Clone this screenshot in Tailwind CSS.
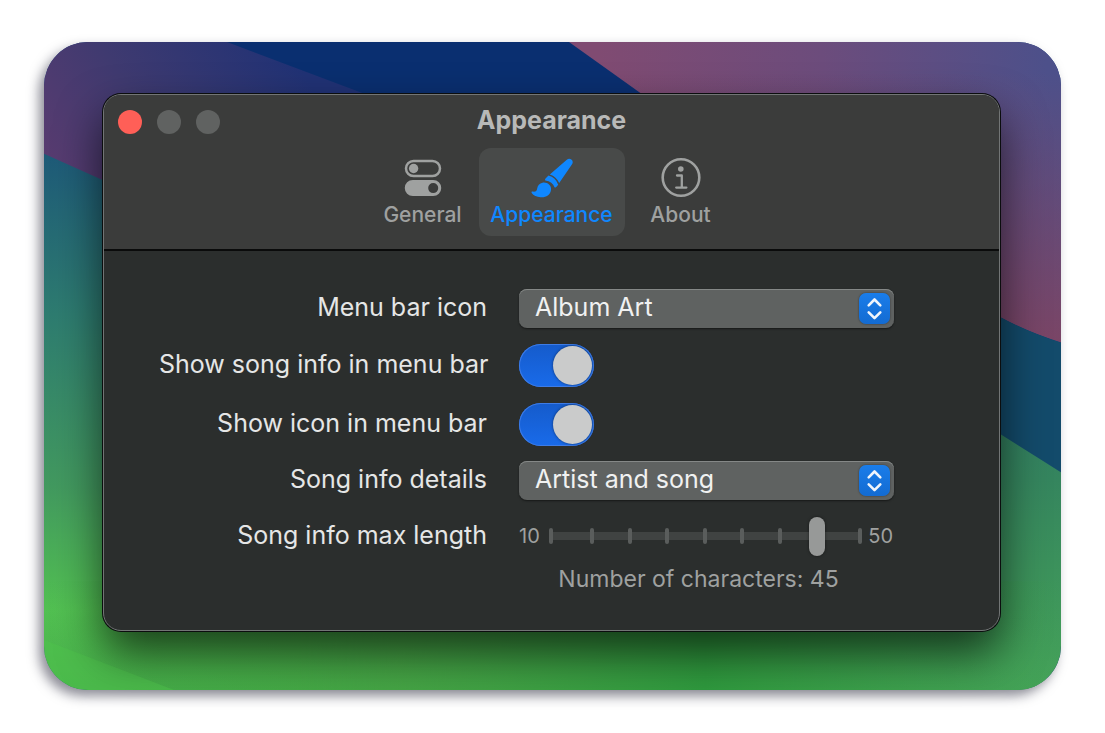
<!DOCTYPE html>
<html lang="en">
<head>
<meta charset="utf-8">
<meta name="viewport" content="width=device-width, initial-scale=1">
<title>Appearance</title>
<script src="https://cdn.jsdelivr.net/npm/@tailwindcss/browser@4"></script>
</head>
<body class="bg-white px-11 py-[42px] font-['Inter',sans-serif]">
<main class="relative isolate overflow-visible rounded-[44px] pt-[52px] pr-[61px] pb-[59px] pl-[59px] shadow-[-5px_6px_12px_rgba(30,30,50,0.5)]">
  <!-- Wallpaper -->
  <div class="absolute inset-0 -z-10 overflow-hidden rounded-[44px]">
    <svg class="size-full" viewBox="0 0 1017 649" preserveAspectRatio="none" aria-hidden="true">
      <defs>
        <linearGradient id="indigo" gradientUnits="userSpaceOnUse" x1="0" y1="150" x2="240" y2="0"><stop offset="0" stop-color="#5d3c70"/><stop offset=".45" stop-color="#3f3a70"/><stop offset="1" stop-color="#213275"/></linearGradient>
        <linearGradient id="pink" gradientUnits="userSpaceOnUse" x1="560" y1="60" x2="1000" y2="0"><stop offset="0" stop-color="#804b72"/><stop offset=".5" stop-color="#6c4c7c"/><stop offset="1" stop-color="#4d508a"/></linearGradient>
        <linearGradient id="pinkfade" x1="0" y1="0" x2="0" y2="1"><stop offset=".1" stop-color="#7a4566" stop-opacity="0"/><stop offset="1" stop-color="#7a4566"/></linearGradient>
        <linearGradient id="left" x1="0" y1="0" x2="0" y2="1"><stop offset="0" stop-color="#1e5a78"/><stop offset=".3" stop-color="#2e7c70"/><stop offset=".62" stop-color="#42995f"/><stop offset=".85" stop-color="#52c052"/><stop offset="1" stop-color="#48b04a"/></linearGradient>
        <linearGradient id="right" x1="0" y1="0" x2="0" y2="1"><stop offset="0" stop-color="#2b7068"/><stop offset=".5" stop-color="#35855e"/><stop offset="1" stop-color="#45a359"/></linearGradient>
        <linearGradient id="floor"><stop offset="0" stop-color="#379f40" stop-opacity="0"/><stop offset=".35" stop-color="#44a040" stop-opacity=".6"/><stop offset=".65" stop-color="#2f9a3e"/><stop offset="1" stop-color="#379f40" stop-opacity="0"/></linearGradient>
        <linearGradient id="fade"><stop offset=".25" stop-color="#fff" stop-opacity="0"/><stop offset=".75" stop-color="#fff"/></linearGradient>
        <mask id="rightmask"><rect y="380" width="1017" height="269" fill="url(#fade)"/></mask>
      </defs>
      <rect width="1017" height="649" fill="#0a2f70"/>
      <path d="M0 0H183L390 78V300H0Z" fill="url(#indigo)"/>
      <path d="M525 0H1017V301Q985 291 957 276L750 161Z" fill="url(#pink)"/>
      <path d="M525 0H1017V301Q985 291 957 276L750 161Z" fill="url(#pinkfade)"/>
      <path d="M0 112L58 138L700 400L1017 649H0Z" fill="url(#left)"/>
      <path d="M700 170L957 276Q985 291 1017 301V431L700 240Z" fill="#134b6b"/>
      <path d="M700 227L957 393L1017 431V649H0V500Z" fill="url(#right)" mask="url(#rightmask)"/>
      <rect y="540" width="1017" height="109" fill="url(#floor)"/>
      <path d="M0 599L130 649H0Z" fill="#4fc24c" opacity=".6"/>
    </svg>
  </div>

  <section aria-label="Appearance settings" class="overflow-hidden rounded-[18px] border border-[#727575] bg-[#2b2e2d] shadow-[0_0_0_1px_#0b0d0e,0_22px_45px_rgba(0,0,0,0.65)]">
    <header class="border-b-2 border-[#0a0b0b] bg-[#3b3c3b] pb-[13px]">
      <div class="grid h-[53px] grid-cols-[1fr_auto_1fr] items-center">
        <div class="flex gap-[15px] pl-[14px]">
          <button aria-label="Close" class="size-6 rounded-full bg-[#ff5f57]"></button>
          <button aria-label="Minimize" class="size-6 rounded-full bg-[#606261]"></button>
          <button aria-label="Zoom" class="size-6 rounded-full bg-[#606261]"></button>
        </div>
        <h1 class="pb-1 text-[25px] leading-8 font-bold text-[#b8b9b8]">Appearance</h1>
      </div>
      <nav class="flex justify-center gap-[5px] text-[21px] leading-7 font-medium text-[#9fa1a0]">
        <button class="flex h-[88px] w-[102px] flex-col items-center gap-[2px] pt-[9px]">
          <svg class="size-[42px]" viewBox="0 0 42 42" fill="none" aria-hidden="true">
            <rect x="4" y="4" width="34" height="15" rx="7.5" stroke="currentColor" stroke-width="2.5"/>
            <circle cx="11.600" cy="11.500" r="4.700" fill="currentColor"/>
            <path fill-rule="evenodd" fill="currentColor" d="M10.800 23H31.200A8.050 8.050 0 0 1 31.200 39.100H10.800A8.050 8.050 0 0 1 10.800 23ZM31.200 26.100A5 5 0 1 0 31.200 36.100A5 5 0 1 0 31.200 26.100Z"/>
          </svg>
          <span>General</span>
        </button>
        <button aria-current="page" class="flex h-[88px] w-[146px] flex-col items-center gap-[2px] rounded-xl bg-[#484a49] pt-[9px] text-[#0f87ff]">
          <svg class="size-[42px]" viewBox="0 0 42 42" fill="currentColor" aria-hidden="true">
            <path d="M18.800 17.500L35.500 3Q38 1 40 2.300Q42.700 4 41.200 7L28.200 26Q25.400 19.700 18.800 17.500Z"/>
            <path d="M17.500 18.600Q24.700 20.600 27.200 27.700L25.500 29.800Q24.500 31 23.500 30.200Q21.600 24.700 14.300 23.500Q13.500 22.600 14.500 21.400Z"/>
            <path d="M11.600 25.700C16.300 24.900 20.800 28.500 20 33C19.200 38.500 14.500 40.700 9.500 40.200C5.800 39.800 2.400 38.600 .7 36C.2 35 .7 34.400 1.600 34.600C4.700 35 5.800 34 6.100 31.800C6.600 28.400 8.400 26.200 11.600 25.700Z"/>
          </svg>
          <span>Appearance</span>
        </button>
        <button class="flex h-[88px] w-[102px] flex-col items-center gap-[2px] pt-[9px]">
          <svg class="size-[42px]" viewBox="0 0 42 42" fill="none" stroke="currentColor" stroke-width="2.600" aria-hidden="true">
            <circle cx="21" cy="20.500" r="18.300"/>
            <circle cx="20.800" cy="12" r="2.800" fill="currentColor" stroke="none"/>
            <path d="M17 18.500H21.800V30.500M16.200 30.600H26.400" stroke-width="2.300" stroke-linecap="round" stroke-linejoin="round"/>
          </svg>
          <span>About</span>
        </button>
      </nav>
    </header>

    <form class="grid grid-cols-[minmax(0,328px)_375px] items-center justify-center gap-x-8 pt-[38px] pr-[50px] pb-[35px] text-[25px] leading-8 text-[#e5e6e6]">
      <label for="icon" class="mb-2 pb-[3px] text-right whitespace-nowrap">Menu bar icon</label>
      <div class="relative mb-2">
        <select id="icon" class="block h-[39px] w-full appearance-none rounded-lg bg-[#5f6261] pb-[3px] pl-4 text-[#f0f1f1] shadow-[inset_0_1px_0_#858887,0_1px_2px_rgba(0,0,0,0.5)]"><option>Album Art</option></select>
        <span class="pointer-events-none absolute top-1 right-1 size-[31px] rounded-[7px] bg-linear-to-b from-[#1a7dea] to-[#136bd2] shadow-[0_0_2px_rgba(0,0,0,0.5)]">
          <svg class="size-full" viewBox="0 0 31 31" fill="none" stroke="#f1f5fb" stroke-width="2.600" stroke-linecap="round" stroke-linejoin="round" aria-hidden="true"><path d="M9.700 12.300L15.500 6.500L21.300 12.300M9.700 19.400L15.500 25.200L21.300 19.400"/></svg>
        </span>
      </div>

      <label for="songinfo" class="pb-[3px] text-right whitespace-nowrap">Show song info in menu bar</label>
      <div class="flex h-[59px] items-center">
        <input id="songinfo" type="checkbox" role="switch" checked class="flex h-[43px] w-[75px] appearance-none items-center justify-end rounded-full bg-linear-to-b from-[#155bcb] to-[#196bea] pr-[2px] shadow-[inset_0_0_0_1px_#3e7ce6] before:size-[39px] before:rounded-full before:bg-[#cacbcb] before:shadow-[0_0_3px_rgba(0,0,0,0.5)] before:content-['']">
      </div>

      <label for="showicon" class="pb-[3px] text-right whitespace-nowrap">Show icon in menu bar</label>
      <div class="flex h-[59px] items-center">
        <input id="showicon" type="checkbox" role="switch" checked class="flex h-[43px] w-[75px] appearance-none items-center justify-end rounded-full bg-linear-to-b from-[#155bcb] to-[#196bea] pr-[2px] shadow-[inset_0_0_0_1px_#3e7ce6] before:size-[39px] before:rounded-full before:bg-[#cacbcb] before:shadow-[0_0_3px_rgba(0,0,0,0.5)] before:content-['']">
      </div>

      <label for="details" class="pb-[3px] text-right whitespace-nowrap">Song info details</label>
      <div class="relative my-[7px]">
        <select id="details" class="block h-[39px] w-full appearance-none rounded-lg bg-[#5f6261] pb-[3px] pl-4 text-[#f0f1f1] shadow-[inset_0_1px_0_#858887,0_1px_2px_rgba(0,0,0,0.5)]"><option>Artist and song</option></select>
        <span class="pointer-events-none absolute top-1 right-1 size-[31px] rounded-[7px] bg-linear-to-b from-[#1a7dea] to-[#136bd2] shadow-[0_0_2px_rgba(0,0,0,0.5)]">
          <svg class="size-full" viewBox="0 0 31 31" fill="none" stroke="#f1f5fb" stroke-width="2.600" stroke-linecap="round" stroke-linejoin="round" aria-hidden="true"><path d="M9.700 12.300L15.500 6.500L21.300 12.300M9.700 19.400L15.500 25.200L21.300 19.400"/></svg>
        </span>
      </div>

      <label for="length" class="mt-[9px] pb-[3px] text-right whitespace-nowrap">Song info max length</label>
      <div class="mt-[9px] flex h-10 items-center text-xl text-[#9fa1a0]">
        <span class="w-7">10</span>
        <div class="relative h-10 flex-1">
          <div class="absolute inset-x-[2px] top-4 h-2 bg-[#404342]"></div>
          <div class="absolute inset-x-0 top-3 flex h-4 pl-[2px]">
            <i class="w-1 rounded-full bg-[#5a5d5c]"></i>
            <div class="mr-[39px] ml-[37px] flex flex-1 justify-between">
              <i class="w-1 rounded-full bg-[#5a5d5c]"></i><i class="w-1 rounded-full bg-[#5a5d5c]"></i><i class="w-1 rounded-full bg-[#5a5d5c]"></i><i class="w-1 rounded-full bg-[#5a5d5c]"></i><i class="w-1 rounded-full bg-[#5a5d5c]"></i><i class="w-1 rounded-full bg-[#5a5d5c]"></i><i class="w-1 rounded-full bg-[#5a5d5c]"></i>
            </div>
            <i class="w-1 rounded-full bg-[#5a5d5c]"></i>
          </div>
          <input id="length" type="range" min="10" max="50" step="5" value="45" class="absolute inset-0 h-10 w-full appearance-none bg-transparent [&::-webkit-slider-thumb]:h-[39px] [&::-webkit-slider-thumb]:w-4 [&::-webkit-slider-thumb]:appearance-none [&::-webkit-slider-thumb]:rounded-full [&::-webkit-slider-thumb]:bg-[#979998] [&::-webkit-slider-thumb]:shadow-[0_0_3px_rgba(0,0,0,0.5)]">
        </div>
        <span class="w-8 pr-px text-right">50</span>
      </div>

      <output for="length" class="col-start-2 mt-[7px] pr-4 text-center text-[23px] text-[#9fa1a0]">Number of characters: 45</output>
    </form>
  </section>
</main>
</body>
</html>
